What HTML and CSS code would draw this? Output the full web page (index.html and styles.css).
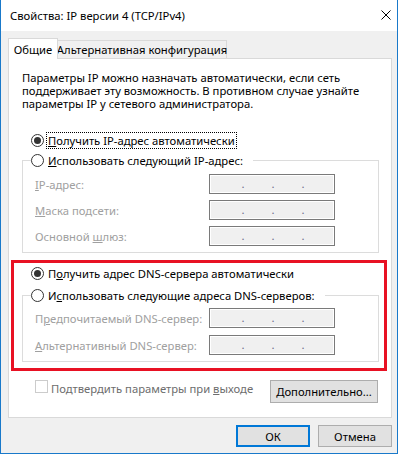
FILE: index.html
```html
<!DOCTYPE html>
<html lang="ru">
<head>
    <meta charset="UTF-8">
    <title>Свойства: IP версии 4 (TCP/IPv4)</title>
    <link rel="stylesheet" href="styles.css">
</head>
<body>
    <div class="window">
        <div class="titlebar">
            <span class="title">Свойства: IP версии 4 (TCP/IPv4)</span>
            <svg class="close" width="10" height="10" viewBox="0 0 10 10">
                <path d="M0.5 0.5L9.5 9.5M9.5 0.5L0.5 9.5" stroke="#000" stroke-width="1" fill="none"/>
            </svg>
        </div>

        <div class="content">
            <div class="tabs">
                <div class="tab active">Общие</div>
                <div class="tab">Альтернативная конфигурация</div>
            </div>

            <div class="panel">
                <p class="intro">Параметры IP можно назначать автоматически, если сеть поддерживает эту возможность. В противном случае узнайте параметры IP у сетевого администратора.</p>

                <div class="radio-row first">
                    <span class="radio checked"></span>
                    <span class="radio-label focus"><u>П</u>олучить IP-адрес автоматически</span>
                </div>

                <fieldset class="group">
                    <legend class="radio-row">
                        <span class="radio"></span>
                        <span class="radio-label"><u>И</u>спользовать следующий IP-адрес:</span>
                    </legend>
                    <div class="field-row">
                        <span class="field-label"><u>I</u>P-адрес:</span>
                        <span class="ip"><i>.</i><i>.</i><i>.</i></span>
                    </div>
                    <div class="field-row">
                        <span class="field-label"><u>М</u>аска подсети:</span>
                        <span class="ip"><i>.</i><i>.</i><i>.</i></span>
                    </div>
                    <div class="field-row">
                        <span class="field-label">Основной <u>ш</u>люз:</span>
                        <span class="ip"><i>.</i><i>.</i><i>.</i></span>
                    </div>
                </fieldset>

                <div class="highlight">
                    <div class="radio-row">
                        <span class="radio checked"></span>
                        <span class="radio-label">П<u>о</u>лучить адрес DNS-сервера автоматически</span>
                    </div>

                    <fieldset class="group dns">
                        <legend class="radio-row">
                            <span class="radio"></span>
                            <span class="radio-label">И<u>с</u>пользовать следующие адреса DNS-серверов:</span>
                        </legend>
                        <div class="field-row">
                            <span class="field-label">П<u>р</u>едпочитаемый DNS-сервер:</span>
                            <span class="ip"><i>.</i><i>.</i><i>.</i></span>
                        </div>
                        <div class="field-row">
                            <span class="field-label"><u>А</u>льтернативный DNS-сервер:</span>
                            <span class="ip"><i>.</i><i>.</i><i>.</i></span>
                        </div>
                    </fieldset>
                </div>

                <div class="bottom-row">
                    <label class="check"><span class="box"></span><span>Подтвердить параметры при <u>в</u>ыходе</span></label>
                    <button class="btn advanced"><u>Д</u>ополнительно...</button>
                </div>
            </div>

            <div class="footer">
                <button class="btn default">ОК</button>
                <button class="btn">Отмена</button>
            </div>
        </div>
    </div>
</body>
</html>
```

FILE: styles.css
```css
*, *::before, *::after {
	box-sizing: border-box;
}

body {
	margin: 0;
	background: #fff;
	font-family: "Noto Sans", "Open Sans", sans-serif;
	font-size: 11.25px;
	color: #000;
}

.window {
	width: 398px;
	height: 454px;
	border: 1px solid #1979ca;
	border-top: none;
	background: #f0f0f0;
}

.titlebar {
	height: 31px;
	background: #fff;
	display: flex;
	align-items: center;
	justify-content: space-between;
	padding: 0 6px 1px 9px;
}

.close {
	display: block;
}

.content {
	padding: 7px 0 0 7px;
}

/* tabs */
.tabs {
	display: flex;
	align-items: flex-end;
	height: 20px;
}

.tab {
	height: 18px;
	width: 169px;
	border: 1px solid #d9d9d9;
	border-bottom: none;
	border-left: none;
	display: flex;
	align-items: center;
	justify-content: center;
	background: #f0f0f0;
	white-space: nowrap;
}

.tab.active {
	width: 50px;
	height: 21px;
	margin-bottom: -1px;
	border-left: 1px solid #d9d9d9;
	background: #fff;
	position: relative;
}

.panel {
	width: 384px;
	height: 360px;
	background: #fff;
	border: 1px solid #d9d9d9;
	padding: 0 12px 0 13px;
}

.intro {
	margin: 12px 0 0;
	line-height: 13px;
}

/* radios */
.radio-row {
	display: flex;
	align-items: center;
	height: 17px;
	padding-left: 9px;
}

.radio-row.first {
	margin-top: 22px;
}

.radio {
	width: 13px;
	height: 13px;
	border: 1px solid #333;
	border-radius: 50%;
	background: #fff;
	margin-right: 2px;
	flex: none;
	display: flex;
	align-items: center;
	justify-content: center;
}

.radio.checked::after {
	content: '';
	width: 7px;
	height: 7px;
	border-radius: 50%;
	background: #333;
}

.radio-label {
	line-height: 15px;
	padding: 0 1px;
	border: 1px solid transparent;
	white-space: nowrap;
}

.radio-label.focus {
	border: 1px dotted #000;
}

/* group boxes */
.group {
	margin: 3px 0 0;
	padding: 5px 0 6px 8px;
	border: 1px solid #dcdcdc;
	min-width: 0;
}

.group legend.radio-row {
	padding: 0 8px 0 0;
	background: #fff;
}

.group.dns {
	margin-top: 5px;
	padding-top: 4px;
}

.field-row {
	display: flex;
	align-items: center;
	height: 20px;
	padding-left: 4px;
	color: #a0a0a0;
}

.field-row + .field-row {
	margin-top: 6px;
}

.dns .field-row + .field-row {
	margin-top: 7px;
}

.field-label {
	width: 174px;
	white-space: nowrap;
}

.ip {
	width: 126px;
	height: 20px;
	border: 1px solid #7a7a7a;
	background: #f0f0f0;
	box-shadow: inset 0 0 0 1px #fff;
	display: flex;
	padding-left: 31px;
	gap: 26px;
	color: #6a6a8a;
}

.ip i {
	font-style: normal;
	width: 4px;
	text-align: center;
	line-height: 17px;
}

/* red marker around the DNS block */
.highlight {
	margin: 7px -8px 0 -11px;
	border: 3px solid #e81123;
	padding: 2px 5px 6px 8px;
}

/* bottom line of the tab */
.bottom-row {
	display: flex;
	justify-content: space-between;
	align-items: flex-start;
	margin-top: 9px;
}

.check {
	display: flex;
	align-items: flex-start;
	padding-left: 13px;
	line-height: 17px;
	color: #6d6d6d;
}

.check .box {
	width: 13px;
	height: 13px;
	border: 1px solid #cccccc;
	background: #fff;
	margin-right: 3px;
}

.btn {
	height: 22px;
	width: 74px;
	padding: 0;
	background: #e1e1e1;
	border: 1px solid #adadad;
	font: inherit;
	color: #000;
}

.btn.advanced {
	width: 108px;
	height: 23px;
	margin-right: 1px;
}

.btn.default {
	border: 2px solid #0078d7;
}

.footer {
	display: flex;
	justify-content: flex-end;
	gap: 8px;
	width: 384px;
	margin-top: 7px;
}
```
